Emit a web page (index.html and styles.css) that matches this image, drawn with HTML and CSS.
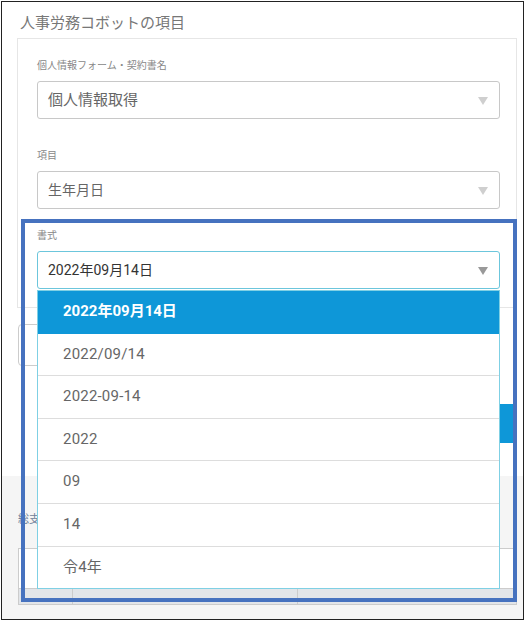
FILE: index.html
```html
<!DOCTYPE html>
<html lang="ja">
<head>
  <meta charset="UTF-8">
  <meta name="viewport" content="width=device-width, initial-scale=1.0">
  <title>人事労務コボットの項目</title>
  <link rel="stylesheet" href="styles.css">
</head>
<body>
  <div class="screen">
    <p class="section-title">人事労務コボットの項目</p>

    <div class="card">
      <div class="field field-form">
        <label class="field-label">個人情報フォーム・契約書名</label>
        <div class="select is-muted">個人情報取得</div>
      </div>

      <div class="field field-item">
        <label class="field-label">項目</label>
        <div class="select is-muted is-small">生年月日</div>
      </div>

      <div class="field field-format">
        <label class="field-label">書式</label>
        <div class="select is-open">2022年09月14日</div>
        <ul class="options">
          <li class="option is-selected">2022年09月14日</li>
          <li class="option">2022/09/14</li>
          <li class="option">2022-09-14</li>
          <li class="option">2022</li>
          <li class="option">09</li>
          <li class="option">14</li>
          <li class="option">令4年</li>
        </ul>
      </div>
    </div>

    <div class="text-box"></div>

    <div class="action-row">
      <button class="primary-btn">追加</button>
    </div>

    <div class="summary">
      <p class="summary-label">総支給額</p>
      <table class="summary-table">
        <tr>
          <td class="col-no"></td>
          <td class="col-name"></td>
          <td class="col-value"></td>
        </tr>
        <tr class="row-foot">
          <td></td>
          <td></td>
          <td></td>
        </tr>
      </table>
    </div>

    <div class="callout"></div>
  </div>
</body>
</html>
```

FILE: styles.css
```css
body {
  margin: 0;
  padding: 0;
  background-color: #fff;
  font-family: Roboto, "Noto Sans CJK JP", sans-serif;
  color: #555;
}

.screen {
  position: relative;
  margin: 1px;
  width: 521px;
  height: 617px;
  border: 1px solid #222;
  overflow: hidden;
  display: flex;
  flex-direction: column;
}

.section-title {
  margin: 0;
  padding: 11px 0 0 18px;
  font-size: 15px;
  line-height: 20px;
  color: #777;
}

.card {
  margin: 5px 6px 0 15px;
  padding: 20px 16px 18px 19px;
  border: 1px solid #e6e6e6;
}

.field {
  position: relative;
}

.field-item {
  margin-top: 30px;
}

.field-format {
  margin-top: 20px;
}

.field-label {
  display: block;
  margin-bottom: 8px;
  font-size: 10px;
  line-height: 14px;
  color: #888;
}

.select {
  position: relative;
  height: 38px;
  box-sizing: border-box;
  padding: 0 30px 0 10px;
  border: 1px solid #c8c8c8;
  border-radius: 3px;
  font-size: 15px;
  line-height: 36px;
  color: #666;
}

.select::after {
  content: "";
  position: absolute;
  right: 11px;
  top: 15px;
  border-left: 5px solid transparent;
  border-right: 5px solid transparent;
  border-top: 8px solid #999;
}

.select.is-muted::after {
  border-top-color: #cfcfcf;
}

.select.is-small {
  font-size: 14px;
}

.select.is-open {
  border-color: #6cc6dc;
  font-size: 14px;
  color: #333;
}

/* open dropdown list under the format select */
.options {
  position: absolute;
  z-index: 5;
  top: 100%;
  left: 0;
  right: 0;
  margin: 1px 0 0;
  padding: 0;
  list-style: none;
  background-color: #fff;
  border: 1px solid #7fd0e4;
}

.option {
  height: 41.6px;
  box-sizing: content-box;
  padding-left: 25px;
  border-bottom: 1px solid #ddd;
  font-size: 15px;
  line-height: 41px;
  letter-spacing: 0.2px;
  color: #666;
}

.option:last-child {
  border-bottom: none;
}

.option.is-selected {
  background-color: #0e97d8;
  border-bottom-color: #0e97d8;
  color: #fff;
  font-weight: bold;
  letter-spacing: 0;
}

.text-box {
  margin: 16px 0 0 16px;
  width: 460px;
  height: 42px;
  box-sizing: border-box;
  border: 1px solid #ccc;
  border-radius: 4px;
}

.action-row {
  display: flex;
  justify-content: flex-end;
  margin: 38px 6px 0 0;
}

.primary-btn {
  width: 110px;
  height: 39px;
  border: none;
  border-radius: 3px;
  background-color: #0e97d8;
  color: #fff;
  font-size: 14px;
}

.summary {
  flex: 1;
  margin-top: 33px;
  padding: 37px 6px 0 16px;
  background-color: #f5f5f5;
}

.summary-label {
  margin: 0 0 21px;
  font-size: 11px;
  line-height: 14px;
  color: #6f8099;
}

.summary-table {
  width: 499px;
  border-collapse: collapse;
  background-color: #fff;
}

.summary-table td {
  height: 39px;
  padding: 0;
  border: 1px solid #ccc;
}

.summary-table .col-no {
  width: 53px;
}

.summary-table .col-name {
  width: 224px;
}

.summary-table .row-foot td {
  height: 15px;
  background-color: #e2e5e9;
}

/* blue outline drawn around the format field */
.callout {
  position: absolute;
  z-index: 10;
  left: 19px;
  top: 217px;
  width: 488px;
  height: 375px;
  border: 4px solid #4672bf;
}
```
